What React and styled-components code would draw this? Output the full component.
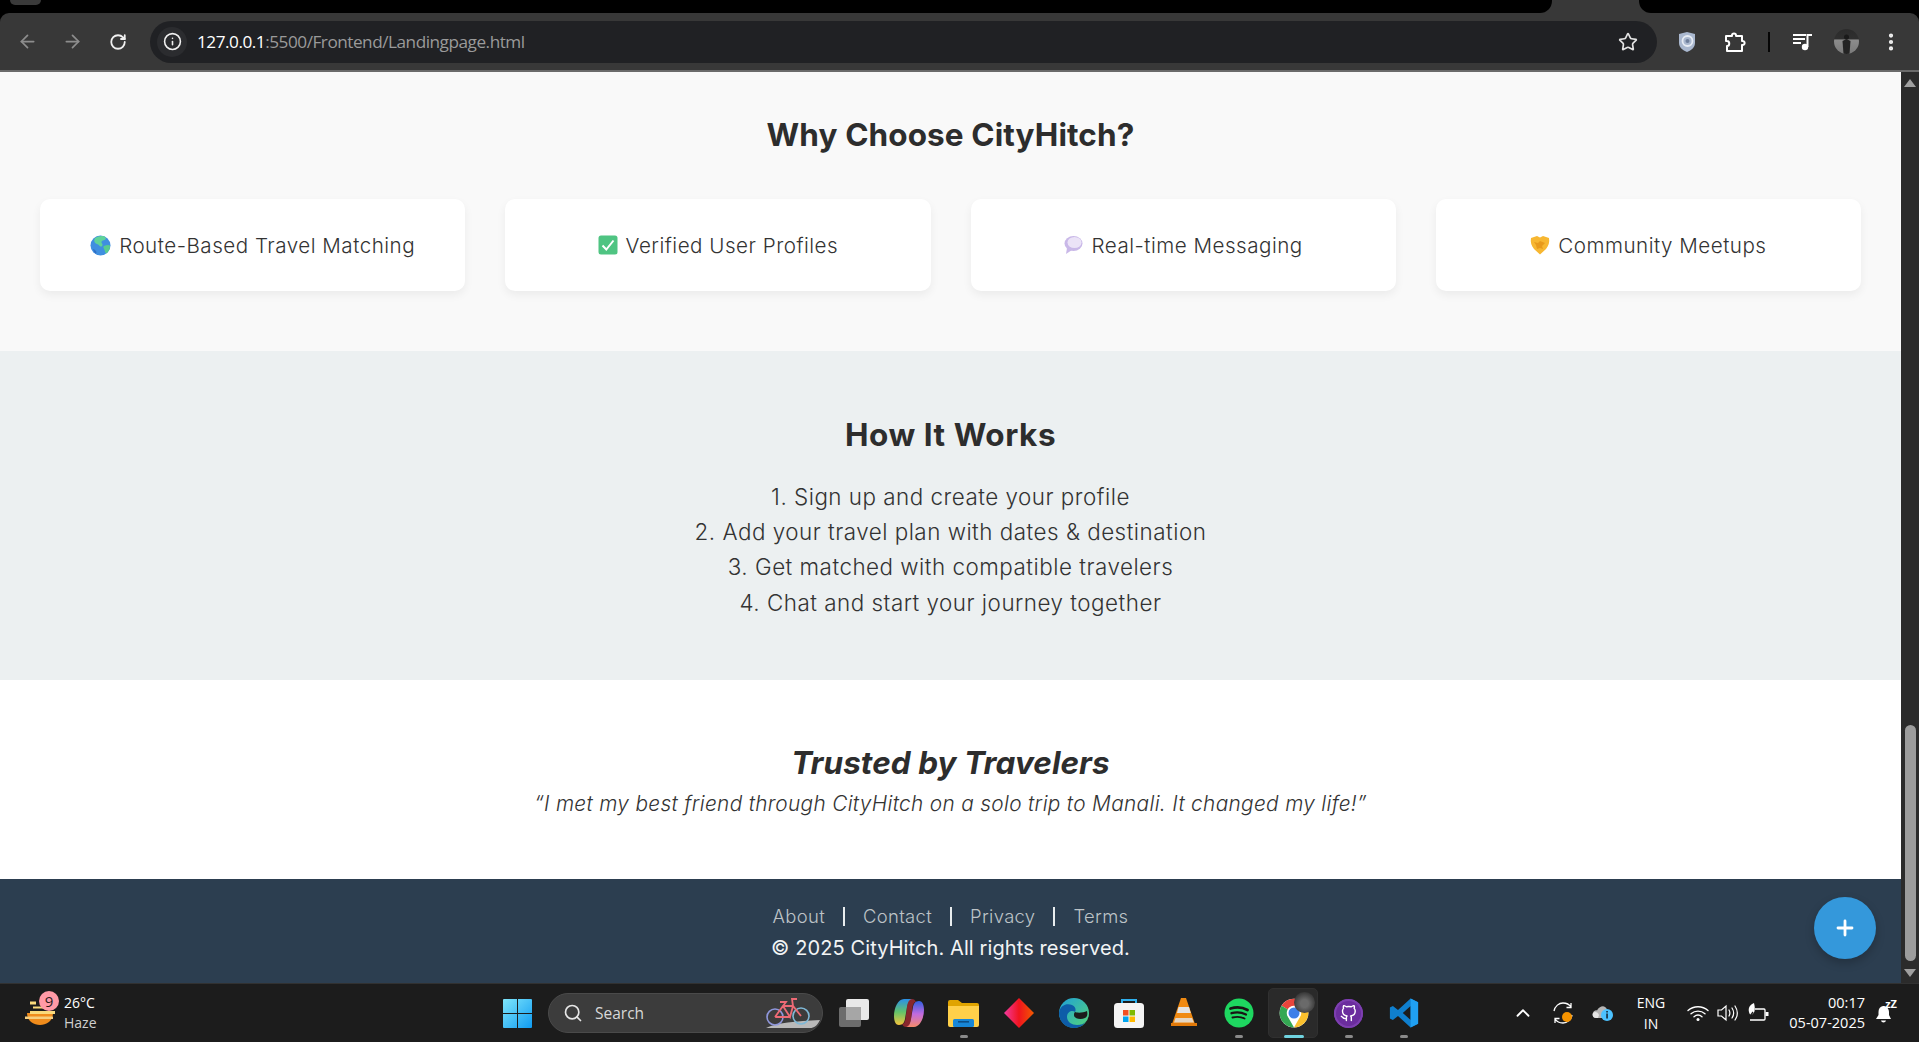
import React from "react";
import styled, { createGlobalStyle } from "styled-components";
import { ArrowLeft, ArrowRight, RotateCw, Info, Star, MoreVertical, Search, ChevronUp, Plus } from "lucide-react";
import { FiGithub } from "react-icons/fi";

const Global = createGlobalStyle`
  html, body { margin: 0; padding: 0; height: 100%; overflow: hidden; background: #1c1c1c; }
  * { box-sizing: border-box; }
  #root { height: 100%; }
`;

const Shell = styled.div`
  position: relative;
  height: 1042px;
  display: flex;
  flex-direction: column;
  font-family: Inter, "Liberation Sans", sans-serif;
`;

/* ---------- browser chrome ---------- */
const Header = styled.header`
  background: #000;
  flex: none;
`;
const TabStrip = styled.div`
  height: 13px;
  background: #383838;
  display: flex;
  justify-content: space-between;
`;
const StripLeft = styled.div`
  width: 1552px;
  background: #000;
  border-bottom-right-radius: 12px;
  padding-left: 10px;
`;
const StripRight = styled.div`
  width: 280px;
  background: #000;
  border-bottom-left-radius: 12px;
`;
const TabStub = styled.div`
  width: 31px;
  height: 5px;
  background: #3a3a3a;
  border-radius: 0 0 10px 10px;
`;
const Toolbar = styled.div`
  height: 59px;
  background: #383838;
  border-top-left-radius: 9px;
  border-top-right-radius: 9px;
  border-bottom: 2px solid #6b6b6b;
  display: flex;
  align-items: center;
  padding-left: 5px;
`;
const NavButton = styled.div`
  width: 45px;
  height: 40px;
  flex: none;
  display: flex;
  align-items: center;
  justify-content: center;
  color: ${(p) => (p.$dim ? "#8d8d8d" : "#f1f1f1")};
`;
const Omnibox = styled.div`
  margin-left: 10px;
  width: 1507px;
  height: 42px;
  flex: none;
  background: #202124;
  border-radius: 21px;
  display: flex;
  align-items: center;
  padding: 0 19px 0 7px;
`;
const SiteInfo = styled.div`
  width: 30px;
  height: 30px;
  border-radius: 50%;
  background: #2b2c2f;
  display: flex;
  align-items: center;
  justify-content: center;
  color: #f1f1f1;
  flex: none;
`;
const Url = styled.div`
  margin-left: 10px;
  flex: 1;
  font-family: "Open Sans", "Noto Sans", sans-serif;
  font-size: 17.2px;
  letter-spacing: -0.48px;
  color: #9a9a9a;
  white-space: nowrap;
`;
const UrlHost = styled.span`
  color: #fff;
`;
const ToolSlot = styled.div`
  flex: none;
  width: ${(p) => p.$w}px;
  height: 40px;
  display: flex;
  align-items: center;
  justify-content: center;
  color: #f1f1f1;
`;
const ToolDivider = styled.div`
  width: 2px;
  height: 20px;
  background: #050505;
  flex: none;
  margin: 0 21px 0 14px;
`;

/* ---------- page ---------- */
const Middle = styled.div`
  flex: 1;
  min-height: 0;
  display: flex;
`;
const Page = styled.main`
  flex: 1;
  min-width: 0;
  display: flex;
  flex-direction: column;
  color: #333;
`;
const FeatureSection = styled.section`
  height: 279px;
  background: #f9f9f9;
  padding: 43px 40px 0;
`;
const StepsSection = styled.section`
  height: 329px;
  background: #ecf0f1;
  padding-top: 64px;
  text-align: center;
`;
const TrustSection = styled.section`
  height: 199px;
  background: #fff;
  padding-top: 63px;
  text-align: center;
`;
const Heading = styled.h2`
  margin: 0;
  font-size: 31.5px;
  line-height: 39px;
  font-weight: 700;
  letter-spacing: 0.1px;
  text-align: center;
  color: #2d2d2d;
`;
const StepsHeading = styled(Heading)`
  letter-spacing: 0.55px;
`;
const TrustHeading = styled(Heading)`
  font-style: italic;
  letter-spacing: 0.05px;
`;
const FeatureGrid = styled.div`
  margin-top: 45px;
  display: grid;
  grid-template-columns: repeat(4, 1fr);
  gap: 40px;
`;
const FeatureCard = styled.div`
  height: 92px;
  background: #fff;
  border-radius: 10px;
  box-shadow: 0 4px 10px rgba(0, 0, 0, 0.06);
  display: flex;
  align-items: center;
  justify-content: center;
  gap: 8px;
  font-size: 20.6px;
  font-weight: 300;
  letter-spacing: 0.5px;
  color: #333;
`;
const StepList = styled.ol`
  list-style: none;
  margin: 25px 0 0;
  padding: 0;
  font-size: 22.4px;
  line-height: 35.2px;
  font-weight: 300;
  letter-spacing: 0.5px;
`;
const Quote = styled.p`
  margin: 5px 0 0;
  font-size: 20.8px;
  line-height: 33px;
  font-weight: 300;
  font-style: italic;
  letter-spacing: 0.33px;
  color: #333;
`;
const Footer = styled.footer`
  height: 104px;
  background: #2c3e50;
  padding-top: 24px;
  text-align: center;
  color: #fff;
  font-weight: 300;
`;
const FooterLinks = styled.nav`
  height: 26px;
  display: flex;
  justify-content: center;
  align-items: center;
  font-size: 18.4px;
  color: #bdc3c7;
  letter-spacing: 0.35px;
`;
const FooterSep = styled.span`
  width: 2px;
  height: 19px;
  background: #e8ecee;
  margin: 0 18px;
`;
const Copyright = styled.div`
  margin-top: 5px;
  font-size: 20px;
  line-height: 28px;
  font-weight: 400;
  letter-spacing: 0.1px;
  color: #f2f4f5;
`;
const Scrollbar = styled.aside`
  width: 18px;
  flex: none;
  background: #2b2b2b;
  display: flex;
  flex-direction: column;
  align-items: center;
  justify-content: space-between;
  padding: 7px 0 6px;
`;
const ArrowUp = styled.div`
  width: 0;
  height: 0;
  border-left: 6px solid transparent;
  border-right: 6px solid transparent;
  border-bottom: 8px solid #a0a0a0;
`;
const ArrowDown = styled.div`
  width: 0;
  height: 0;
  border-left: 6px solid transparent;
  border-right: 6px solid transparent;
  border-top: 8px solid #a0a0a0;
`;
const Thumb = styled.div`
  position: absolute;
  top: 725px;
  right: 3px;
  width: 11px;
  height: 236px;
  border-radius: 6px;
  background: #9c9c9c;
`;
const Fab = styled.button`
  position: absolute;
  left: 1814px;
  top: 897px;
  width: 62px;
  height: 62px;
  padding: 0;
  border: 0;
  border-radius: 50%;
  background: #3498db;
  color: #fff;
  display: flex;
  align-items: center;
  justify-content: center;
  box-shadow: 0 4px 10px rgba(0, 0, 0, 0.22);
`;

/* ---------- taskbar ---------- */
const Taskbar = styled.footer`
  height: 59px;
  flex: none;
  background: #1c1c1c;
  border-top: 1px solid #313131;
  display: flex;
  align-items: center;
  font-family: "Open Sans", "Noto Sans", sans-serif;
  color: #fff;
`;
const WeatherArea = styled.div`
  position: relative;
  width: 490px;
  flex: none;
  padding-left: 25px;
  display: flex;
  align-items: center;
  gap: 9px;
`;
const Badge = styled.span`
  position: absolute;
  left: 39px;
  top: -2px;
  width: 20px;
  height: 20px;
  border-radius: 50%;
  background: #ff9aa6;
  color: #2a1a1c;
  font-size: 15px;
  line-height: 20px;
  text-align: center;
`;
const WeatherText = styled.div`
  font-size: 14px;
  line-height: 20px;
`;
const WeatherSub = styled.div`
  color: #cfcfcf;
`;
const AppSlot = styled.div`
  position: relative;
  flex: none;
  width: ${(p) => p.$w || 55}px;
  height: 50px;
  display: flex;
  align-items: center;
  justify-content: center;
`;
const ActiveBox = styled.div`
  position: absolute;
  left: 2px;
  right: 3px;
  top: 0;
  bottom: 0;
  background: #2a2a2a;
  border: 1px solid #303030;
  border-radius: 5px;
`;
const ChromeIcon = styled.span`
  position: relative;
  display: flex;
`;
const RunDot = styled.span`
  position: absolute;
  bottom: 0;
  left: 50%;
  transform: translateX(-50%);
  width: ${(p) => (p.$active ? 20 : 8)}px;
  height: 3px;
  border-radius: 2px;
  background: ${(p) => (p.$active ? "#6fd3e0" : "#8a8a8a")};
`;
const SearchBox = styled.div`
  flex: none;
  margin: 0 3px 0 3px;
  width: 275px;
  height: 40px;
  border-radius: 20px;
  background: #3c3c3c;
  border: 1px solid #4a4a4a;
  display: flex;
  align-items: center;
  padding: 0 2px 0 14px;
  color: #d8d8d8;
  font-size: 15.5px;
  gap: 12px;
`;
const SearchLabel = styled.span`
  flex: 1;
`;
const Tray = styled.div`
  margin-left: 72px;
  display: flex;
  align-items: center;
  flex: none;
`;
const TraySlot = styled.div`
  position: relative;
  flex: none;
  width: ${(p) => p.$w}px;
  height: 40px;
  display: flex;
  align-items: center;
  justify-content: center;
`;
const WifiSlot = styled(TraySlot)`
  margin-left: 3px;
`;
const Lang = styled.div`
  font-size: 14px;
  line-height: 21px;
  text-align: center;
`;
const Clock = styled.div`
  flex: none;
  width: 91px;
  text-align: right;
  font-size: 14.5px;
  line-height: 20px;
`;

/* ---------- drawings ---------- */
const Globe = () => (
  <svg width="21" height="21" viewBox="0 0 21 21">
    <circle cx="10.5" cy="10.5" r="10" fill="#3f8fe0" />
    <path d="M5 3c3-2 6-2.500 9-1.800 2 .8 2.500 2.500 1 3.500-1.500 1-3 .5-3.500 2-.5 1.500 1.500 2 1 3.500-.6 2-2.500 1.500-3.500 0-1-1.500-3-1-4-2.500C4 6.500 4 4.500 5 3z" fill="#5fd39a" />
    <path d="M14 11c2-1 5-1.500 6-.5.300 3-1.200 6-3.500 8-1.500-.5-1.500-2-2-3.500-.4-1.500-2-3 -.5-4z" fill="#58cc90" />
    <path d="M3 14c1 0 3 1.500 3.500 3l-.5 2c-1.500-1-2.500-3-3-5z" fill="#2f6fc5" />
  </svg>
);
const CheckBox = () => (
  <svg width="20" height="20" viewBox="0 0 20 20">
    <rect x="0.500" y="0.500" width="19" height="19" rx="2.500" fill="#4fc482" />
    <path d="M4.500 10.500l3.800 4L15.500 5.500" fill="none" stroke="#fff" strokeWidth="2" />
  </svg>
);
const Bubble = () => (
  <svg width="20" height="20" viewBox="0 0 20 20">
    <ellipse cx="10.500" cy="8.500" rx="9" ry="7.500" fill="#c9b8e8" />
    <ellipse cx="11.500" cy="7.500" rx="7" ry="5.500" fill="#ebe3f7" />
    <path d="M4 13l-1 6 6-4z" fill="#c9b8e8" />
  </svg>
);
const Shake = () => (
  <svg width="20" height="20" viewBox="0 0 20 20">
    <path d="M1 3l6-2 3 1.500L13 1l6 2c.8 4-.5 8-3 11l-6 5.500L4 14C1.500 11 .2 7 1 3z" fill="#f7b731" />
    <path d="M4 7l4 1 2-2 5 2-3 3 1 3-3-1-3 1-1-4z" fill="#e89a1c" />
  </svg>
);
const Puzzle = () => (
  <svg width="22" height="22" viewBox="0 0 22 22" fill="none" stroke="#fff" strokeWidth="2" strokeLinejoin="round">
    <path d="M2 5h6c-.5-3.500 4.500-3.500 4 0h6v5c3.500-.5 3.500 4.500 0 4v6H3v-5c3 0 3-5 0-5H2z" />
  </svg>
);
const Shield = () => (
  <svg width="18" height="22" viewBox="0 0 18 22">
    <path d="M9 1l8 2v9c0 4-3.500 7.500-8 9-4.500-1.500-8-5-8-9V3z" fill="#aab8cf" />
    <circle cx="9.500" cy="10" r="5" fill="none" stroke="#e7ecf4" strokeWidth="1.800" />
    <circle cx="9.500" cy="10" r="2" fill="#6f7f9b" />
  </svg>
);
const Media = () => (
  <svg width="20" height="20" viewBox="0 0 20 20" fill="#fff">
    <rect x="0" y="2" width="13" height="2" />
    <rect x="0" y="6" width="12" height="2" />
    <rect x="0" y="10" width="8" height="2" />
    <circle cx="12" cy="15" r="3.200" />
    <path d="M13.500 15V2H19v2h-3.500v11z" />
  </svg>
);
const AvatarDisc = styled.div`
  width: 25px;
  height: 25px;
  border-radius: 50%;
  overflow: hidden;
  background: linear-gradient(#2b2b2b 0%, #2f2f2f 38%, #8c8c8c 45%, #7a7a7a 100%);
  display: flex;
  align-items: center;
  justify-content: center;
`;
const Avatar = () => (
  <AvatarDisc>
    <svg width="25" height="25" viewBox="0 0 25 25">
      <circle cx="12.500" cy="8" r="2.500" fill="#1a1a1a" />
      <path d="M8.500 12l4-2 4 2-1 13H9.500z" fill="#242424" />
    </svg>
  </AvatarDisc>
);
const Weather = () => (
  <svg width="30" height="26" viewBox="0 0 30 26">
    <path d="M2 13h26c0 7-5.500 12-13 12S2 20 2 13z" fill="#f08c1c" />
    <path d="M8 6.500h20v2H8z" fill="#f9da7c" />
    <path d="M5 1.500h6v3H5z" fill="#f9da7c" />
    <path d="M5 11h25v3H5z" fill="#f9da7c" />
    <path d="M0 16.500h28v2.500H0z" fill="#f6cf7f" />
  </svg>
);
const WinLogo = () => (
  <svg width="29" height="29" viewBox="0 0 29 29">
    <defs>
      <linearGradient id="win" x1="0" y1="0" x2="1" y2="1">
        <stop offset="0" stopColor="#7fe6fb" />
        <stop offset="1" stopColor="#0f9bf2" />
      </linearGradient>
    </defs>
    <path d="M1 0h13v14H0V1a1 1 0 0 1 1-1zM15 0h13a1 1 0 0 1 1 1v13H15zM0 15h14v14H1a1 1 0 0 1-1-1zM15 15h14v13a1 1 0 0 1-1 1H15z" fill="url(#win)" />
  </svg>
);
const Bike = () => (
  <svg width="56" height="32" viewBox="0 0 56 32" fill="none">
    <path d="M2 31c10-5 30-7 54-8-3 6-6 8-10 8z" fill="#b9b9b9" />
    <circle cx="11" cy="20" r="8" stroke="#8f97dc" strokeWidth="1.600" />
    <circle cx="37" cy="19" r="8" stroke="#7fb8d6" strokeWidth="1.600" />
    <path d="M11 20L19 9l10 0L37 19M19 9l7 11 3-11M11 20h15M16 5h6l-3 4M29 9l-1-7h5" stroke="#ee6a75" strokeWidth="1.800" />
  </svg>
);
const TaskView = () => (
  <svg width="30" height="28" viewBox="0 0 30 28">
    <rect x="0" y="8" width="22" height="20" rx="2" fill="#6c6c6c" />
    <rect x="7" y="0" width="23" height="21" rx="2" fill="#e9e9e9" />
    <rect x="7" y="8" width="15" height="13" fill="#a6a6a6" />
  </svg>
);
const Copilot = () => (
  <svg width="30" height="28" viewBox="0 0 30 28">
    <defs>
      <linearGradient id="cpA" x1="0" y1="0" x2="0" y2="1">
        <stop offset="0" stopColor="#2a8fe8" />
        <stop offset="0.500" stopColor="#62c36a" />
        <stop offset="1" stopColor="#f5c43c" />
      </linearGradient>
      <linearGradient id="cpB" x1="0" y1="0" x2="0" y2="1">
        <stop offset="0" stopColor="#2f5fe0" />
        <stop offset="0.500" stopColor="#c26ae0" />
        <stop offset="1" stopColor="#f58a6a" />
      </linearGradient>
    </defs>
    <path d="M10 0h8c-3 1-4 3-5 8l-2 12c-.5 3-2 6-6 6C1 26 0 21 0 17 0 9 4 0 10 0z" fill="url(#cpA)" />
    <path d="M20 28h-8c3-1 4-3 5-8l2-12c.5-3 2-6 6-6 4 0 5 5 5 9 0 8-4 17-10 17z" fill="url(#cpB)" />
    <path d="M13 8c1-5 2-8 5-8 2 0 3 1 4 3-2 0-3 2-3.500 5L17 20c-1 5-2 8-5 8-2 0-3-1-4-3 2 0 3-2 3.500-5z" fill="#e0323c" opacity="0.55" />
  </svg>
);
const Explorer = () => (
  <svg width="31" height="27" viewBox="0 0 31 27">
    <path d="M0 2a2 2 0 0 1 2-2h8l4 3h15a2 2 0 0 1 2 2v4H0z" fill="#e0a400" />
    <path d="M0 6h31v19a2 2 0 0 1-2 2H2a2 2 0 0 1-2-2z" fill="#ffd04a" />
    <rect x="5" y="19" width="21" height="8" rx="1.500" fill="#1787d8" />
    <rect x="10" y="21" width="11" height="1.600" fill="#0b4f88" />
  </svg>
);
const Diamond = () => (
  <svg width="30" height="30" viewBox="0 0 30 30">
    <defs>
      <linearGradient id="dm" x1="0" y1="0" x2="1" y2="0">
        <stop offset="0" stopColor="#f23aa0" />
        <stop offset="0.500" stopColor="#f0141e" />
        <stop offset="1" stopColor="#f25a00" />
      </linearGradient>
    </defs>
    <path d="M15 0l15 15-15 15L0 15z" fill="url(#dm)" />
  </svg>
);
const Edge = () => (
  <svg width="30" height="30" viewBox="0 0 30 30">
    <defs>
      <linearGradient id="edg" x1="0" y1="0" x2="1" y2="1">
        <stop offset="0" stopColor="#1fa0d8" />
        <stop offset="1" stopColor="#55d576" />
      </linearGradient>
    </defs>
    <circle cx="15" cy="15" r="15" fill="url(#edg)" />
    <path d="M0 15C1 7 8 5 13 7c4 2 4 5 3 7-2-2-8-1-8 5 0 5 5 8 10 8 4 0 7-1 9-4-3 5-7 7-12 7C6 30 0 23 0 15z" fill="#0e5ca8" />
    <path d="M16 14c2 1 8 1 12-1 1 4 0 6-2 7-4 2-11 1-11-3 0-1 0-2 1-3z" fill="#1c1c1c" />
  </svg>
);
const Store = () => (
  <svg width="30" height="30" viewBox="0 0 30 30">
    <path d="M8 6V2h14v4" fill="none" stroke="#2fb0ee" strokeWidth="2" />
    <rect x="0" y="5" width="30" height="25" rx="3.500" fill="#f4f4f4" />
    <rect x="9" y="12" width="5.500" height="5.500" fill="#f25022" />
    <rect x="15.500" y="12" width="5.500" height="5.500" fill="#7fba00" />
    <rect x="9" y="18.500" width="5.500" height="5.500" fill="#00a4ef" />
    <rect x="15.500" y="18.500" width="5.500" height="5.500" fill="#ffb900" />
  </svg>
);
const Vlc = () => (
  <svg width="26" height="30" viewBox="0 0 26 30">
    <path d="M10 0h5l9 26H1z" fill="#f08a12" />
    <path d="M7.500 9h10.500l1.800 6H6z" fill="#e3e3e3" />
    <path d="M4.500 20h16.500l2 4.500H3z" fill="#e3e3e3" opacity="0.85" />
    <path d="M0 25h26v3H0z" fill="#e27a0a" />
  </svg>
);
const Spotify = () => (
  <svg width="30" height="30" viewBox="0 0 30 30" fill="none" strokeLinecap="round">
    <circle cx="15" cy="15" r="14.500" fill="#1ed760" />
    <path d="M6.500 10.500c6-1.800 12-1.300 17 1.500" stroke="#191414" strokeWidth="2.800" />
    <path d="M7.500 15.200c5-1.400 10-1 14.500 1.300" stroke="#191414" strokeWidth="2.300" />
    <path d="M8.500 19.500c4-1 8.500-.8 12 1" stroke="#191414" strokeWidth="1.900" />
  </svg>
);
const Chrome = () => (
  <svg width="30" height="30" viewBox="0 0 48 48">
    <circle cx="24" cy="24" r="23" fill="#fff" />
    <path d="M24 1a23 23 0 0 1 19.900 11.500H24a11.500 11.500 0 0 0-10 5.800L4.100 12.500A23 23 0 0 1 24 1z" fill="#e8453c" />
    <path d="M4.100 12.500L14 18.300a11.500 11.500 0 0 0 0 11.400l0 0 10 17.300A23 23 0 0 1 4.100 12.500z" fill="#34a853" />
    <path d="M43.900 12.500A23 23 0 0 1 24 47l10-17.300a11.500 11.500 0 0 0 0-11.400 11 11 0 0 0-10-5.800z" fill="#fbc02d" />
    <circle cx="24" cy="24" r="11" fill="#fff" />
    <circle cx="24" cy="24" r="8.800" fill="#3f7fe8" />
  </svg>
);
const ChromeBadge = styled.div`
  position: absolute;
  left: 28px;
  top: 4px;
  width: 21px;
  height: 21px;
  border-radius: 50%;
  background: radial-gradient(circle at 50% 55%, #6a6a6a 25%, #3a3a3a 70%);
`;
const GithubDisc = styled.div`
  width: 29px;
  height: 29px;
  border-radius: 50%;
  background: #6b2d9e;
  box-shadow: inset 0 0 0 2px #7d3fb0;
  color: #fff;
  display: flex;
  align-items: center;
  justify-content: center;
`;
const VsCode = () => (
  <svg width="30" height="30" viewBox="0 0 100 100">
    <path d="M72 2L97 14v72L72 98 30 60 13 73 3 68V32l10-5 17 13z M72 27L46 50l26 23z" fill="#0f7fce" fillRule="evenodd" />
    <path d="M72 2L97 14v72L72 98z" fill="#20a0f2" />
  </svg>
);
const Sync = () => (
  <svg width="22" height="24" viewBox="0 0 22 24" fill="none" stroke="#fff" strokeWidth="1.300">
    <path d="M2 10C3 5 7 2 11 2c3 0 6 1 8 4M19 2v4.500h-4.500" />
    <path d="M20 14c-1 5-5 8-9 8-3 0-6-1-8-4M3 22v-4.500h4.500" />
    <circle cx="15" cy="16" r="5" fill="#f59300" stroke="none" />
  </svg>
);
const CloudInfo = () => (
  <svg width="22" height="18" viewBox="0 0 22 18">
    <path d="M4 14C1 14 0 11 1 9c.5-2 2.500-3 4-2.500C6.500 3 11 1 13 3c1.500 1 2 2 2 3.500L12 14z" fill="#b5b5b5" />
    <path d="M1 9c2-2 5-1 6 2l-1 3H4C1 14 0 11 1 9z" fill="#e5e5e5" />
    <circle cx="15" cy="11" r="6" fill="#4cc2ff" />
    <rect x="14.300" y="9.500" width="1.500" height="5" fill="#12202b" />
    <rect x="14.300" y="7" width="1.500" height="1.500" fill="#12202b" />
  </svg>
);
const Wifi = () => (
  <svg width="22" height="17" viewBox="0 0 22 17" fill="none" stroke="#fff" strokeWidth="1.400" strokeLinecap="round">
    <path d="M1 5.500c5.500-5 14.500-5 20 0" />
    <path d="M4 8.700c4-3.400 10-3.400 14 0" />
    <path d="M7 11.700c2.400-2 5.600-2 8 0" />
    <circle cx="11" cy="14.500" r="1.500" fill="#fff" stroke="none" />
  </svg>
);
const Volume = () => (
  <svg width="22" height="18" viewBox="0 0 22 18" fill="none" stroke="#fff" strokeWidth="1.200" strokeLinecap="round">
    <path d="M1 6h3.500L9 2v14l-4.500-4H1z" />
    <path d="M12 6c1.200 2 1.200 4 0 6M15 4c2 3 2 7 0 10M18 2c3 4.500 3 9.500 0 14" />
  </svg>
);
const Battery = () => (
  <svg width="22" height="20" viewBox="0 0 22 20" fill="none" stroke="#fff" strokeWidth="1.300">
    <path d="M8 6h9a1 1 0 0 1 1 1v9a1 1 0 0 1-1 1H3" />
    <rect x="18.500" y="9" width="3" height="4" fill="#fff" stroke="none" />
    <path d="M7 0C3 1.500 1 5 2 9c.3 1.500 1 2.500 2 3 3-1 5-4 3-12z" fill="#fff" stroke="none" />
    <path d="M1 16l5-7" stroke="#1c1c1c" />
  </svg>
);
const BellBox = styled.div`
  position: relative;
  width: 20px;
  height: 24px;
`;
const SnoozeMark = styled.span`
  position: absolute;
  right: -2px;
  top: -3px;
  font-size: 11px;
  line-height: 12px;
  font-weight: 700;
  color: #fff;
`;
const SnoozeBell = () => (
  <BellBox>
    <svg width="17" height="24" viewBox="0 0 17 24">
      <path d="M8 5c-3 .5-4.500 3-4.500 6v3L1 18h15l-2-4v-3c0-3-2-5.500-5-6z" fill="#fff" />
      <path d="M6 19.500h5c-.5 2.500-4.500 2.500-5 0z" fill="#fff" />
    </svg>
    <SnoozeMark>zZ</SnoozeMark>
  </BellBox>
);

const features = [
  { icon: <Globe />, label: "Route-Based Travel Matching" },
  { icon: <CheckBox />, label: "Verified User Profiles" },
  { icon: <Bubble />, label: "Real-time Messaging" },
  { icon: <Shake />, label: "Community Meetups" },
];
const steps = [
  "1. Sign up and create your profile",
  "2. Add your travel plan with dates & destination",
  "3. Get matched with compatible travelers",
  "4. Chat and start your journey together",
];
const links = ["About", "Contact", "Privacy", "Terms"];

export default function App() {
  return (
    <Shell>
      <Global />
      <Header>
        <TabStrip>
          <StripLeft><TabStub /></StripLeft>
          <StripRight />
        </TabStrip>
        <Toolbar>
          <NavButton $dim><ArrowLeft size={21} strokeWidth={2} /></NavButton>
          <NavButton $dim><ArrowRight size={21} strokeWidth={2} /></NavButton>
          <NavButton><RotateCw size={18} strokeWidth={2.400} /></NavButton>
          <Omnibox>
            <SiteInfo><Info size={19} strokeWidth={2} /></SiteInfo>
            <Url><UrlHost>127.0.0.1</UrlHost>:5500/Frontend/Landingpage.html</Url>
            <Star size={20} strokeWidth={2} color="#e3e3e3" />
          </Omnibox>
          <ToolSlot $w={59}><Shield /></ToolSlot>
          <ToolSlot $w={38}><Puzzle /></ToolSlot>
          <ToolDivider />
          <ToolSlot $w={24}><Media /></ToolSlot>
          <ToolSlot $w={62}><Avatar /></ToolSlot>
          <ToolSlot $w={28}><MoreVertical size={22} strokeWidth={2.600} /></ToolSlot>
        </Toolbar>
      </Header>

      <Middle>
        <Page>
          <FeatureSection>
            <Heading>Why Choose CityHitch?</Heading>
            <FeatureGrid>
              {features.map((f) => (
                <FeatureCard key={f.label}>{f.icon}<span>{f.label}</span></FeatureCard>
              ))}
            </FeatureGrid>
          </FeatureSection>
          <StepsSection>
            <StepsHeading>How It Works</StepsHeading>
            <StepList>
              {steps.map((s) => <li key={s}>{s}</li>)}
            </StepList>
          </StepsSection>
          <TrustSection>
            <TrustHeading>Trusted by Travelers</TrustHeading>
            <Quote>“I met my best friend through CityHitch on a solo trip to Manali. It changed my life!”</Quote>
          </TrustSection>
          <Footer>
            <FooterLinks>
              {links.map((l, i) => (
                <React.Fragment key={l}>
                  {i > 0 && <FooterSep />}
                  <span>{l}</span>
                </React.Fragment>
              ))}
            </FooterLinks>
            <Copyright>© 2025 CityHitch. All rights reserved.</Copyright>
          </Footer>
        </Page>
        <Scrollbar><ArrowUp /><ArrowDown /></Scrollbar>
      </Middle>
      <Thumb />
      <Fab aria-label="Add"><Plus size={24} strokeWidth={2.800} /></Fab>

      <Taskbar>
        <WeatherArea>
          <Weather />
          <Badge>9</Badge>
          <WeatherText>26°C<WeatherSub>Haze</WeatherSub></WeatherText>
        </WeatherArea>
        <AppSlot><WinLogo /></AppSlot>
        <SearchBox>
          <Search size={20} strokeWidth={2} color="#e6e6e6" />
          <SearchLabel>Search</SearchLabel>
          <Bike />
        </SearchBox>
        <AppSlot><TaskView /></AppSlot>
        <AppSlot><Copilot /></AppSlot>
        <AppSlot><Explorer /><RunDot /></AppSlot>
        <AppSlot><Diamond /></AppSlot>
        <AppSlot><Edge /></AppSlot>
        <AppSlot><Store /></AppSlot>
        <AppSlot><Vlc /></AppSlot>
        <AppSlot><Spotify /><RunDot /></AppSlot>
        <AppSlot><ActiveBox /><ChromeIcon><Chrome /></ChromeIcon><ChromeBadge /><RunDot $active /></AppSlot>
        <AppSlot><GithubDisc><FiGithub size={17} /></GithubDisc><RunDot /></AppSlot>
        <AppSlot><VsCode /><RunDot /></AppSlot>
        <Tray>
          <TraySlot $w={40}><ChevronUp size={22} strokeWidth={2} color="#fff" /></TraySlot>
          <TraySlot $w={40}><Sync /></TraySlot>
          <TraySlot $w={40}><CloudInfo /></TraySlot>
          <TraySlot $w={56}><Lang>ENG<br />IN</Lang></TraySlot>
          <WifiSlot $w={32}><Wifi /></WifiSlot>
          <TraySlot $w={28}><Volume /></TraySlot>
          <TraySlot $w={32}><Battery /></TraySlot>
          <Clock>00:17<br />05-07-2025</Clock>
          <TraySlot $w={40}><SnoozeBell /></TraySlot>
        </Tray>
      </Taskbar>
    </Shell>
  );
}
